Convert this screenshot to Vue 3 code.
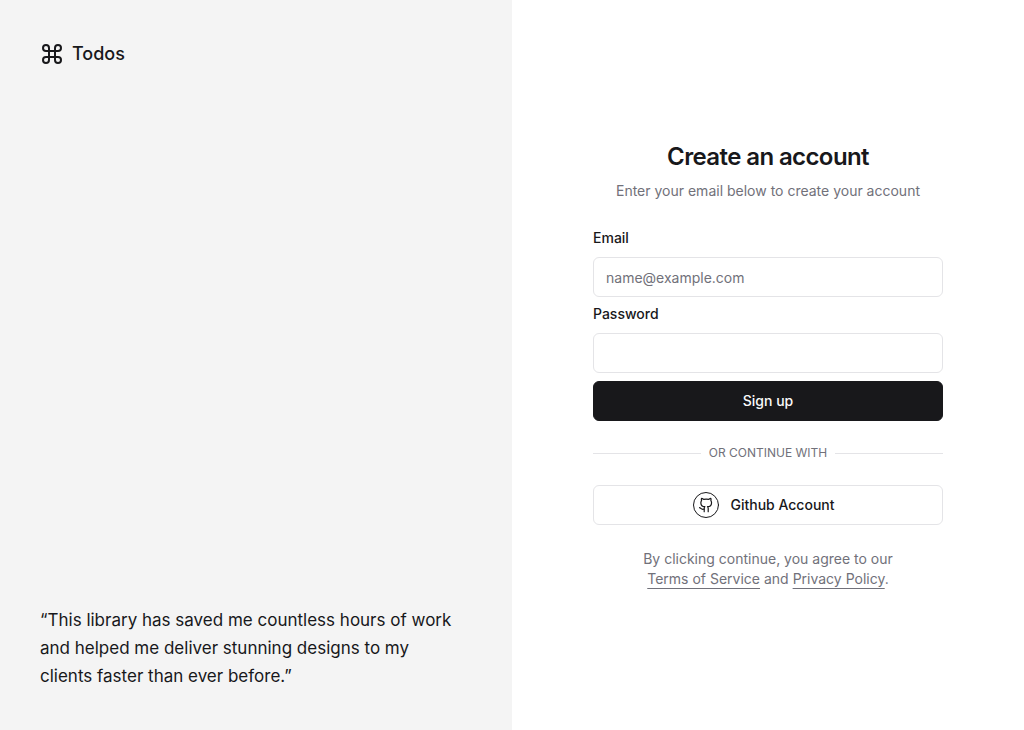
<script setup>
import { ref } from 'vue'

const email = ref('')
const password = ref('')
</script>

<template>
  <div class="page">
    <aside class="side">
      <div class="brand">
        <svg class="brand-icon" viewBox="0 0 24 24" fill="none" stroke="currentColor" stroke-width="2" stroke-linecap="round" stroke-linejoin="round" aria-hidden="true">
          <path d="M15 6v12a3 3 0 1 0 3-3H6a3 3 0 1 0 3 3V6a3 3 0 1 0-3 3h12a3 3 0 1 0-3-3" />
        </svg>
        Todos
      </div>
      <blockquote class="quote">
        <p>“This library has saved me countless hours of work and helped me deliver stunning designs to my clients faster than ever before.”</p>
      </blockquote>
    </aside>
    <main class="main">
      <div class="panel">
        <header class="heading">
          <h1>Create an account</h1>
          <p>Enter your email below to create your account</p>
        </header>
        <form class="form" @submit.prevent>
          <div class="fields">
            <div class="field">
              <div class="label-row"><label for="email">Email</label></div>
              <input id="email" v-model="email" type="email" placeholder="name@example.com" />
            </div>
            <div class="field">
              <div class="label-row"><label for="password">Password</label></div>
              <input id="password" v-model="password" type="password" />
            </div>
          </div>
          <button class="btn primary" type="submit">Sign up</button>
        </form>
        <div class="divider"><span>Or continue with</span></div>
        <button class="btn outline" type="button">
          <svg class="github" viewBox="0 0 26 26" fill="none" stroke="currentColor" stroke-linecap="round" stroke-linejoin="round" aria-hidden="true">
            <circle cx="13" cy="13" r="12.5" />
            <g transform="translate(5.2 5) scale(0.667)" stroke-width="1.8">
              <path d="M15 22v-4a4.800 4.800 0 0 0-1-3.500c3 0 6-2 6-5.500.080-1.250-.270-2.480-1-3.500.280-1.150.280-2.350 0-3.500 0 0-1 0-3 1.500-2.640-.5-5.360-.5-8 0C6 2 5 2 5 2c-.3 1.150-.3 2.350 0 3.500A5.403 5.403 0 0 0 4 9c0 3.500 3 5.500 6 5.500-.390.490-.680 1.050-.850 1.650-.170.600-.220 1.230-.150 1.850v4" />
              <path d="M9 18c-4.510 2-5-2-7-2" />
            </g>
          </svg>
          Github Account
        </button>
        <p class="terms">
          By clicking continue, you agree to our<br />
          <a href="#terms">Terms of Service</a> and <a href="#privacy">Privacy Policy</a>.
        </p>
      </div>
    </main>
  </div>
</template>

<style>
body {
  margin: 0;
  background: #fff;
}
</style>

<style scoped>
.page {
  display: grid;
  grid-template-columns: 1fr 1fr;
  min-height: 100vh;
  color: #18181b;
  font-family: Inter, "Liberation Sans", sans-serif;
  font-size: 14px;
  line-height: 20px;
}
.page * {
  box-sizing: border-box;
}
.side {
  display: flex;
  flex-direction: column;
  justify-content: space-between;
  padding: 40px;
  background: #f4f4f4;
  line-height: 28px;
}
.brand {
  display: flex;
  align-items: center;
  gap: 8px;
  font-size: 18px;
  font-weight: 500;
}
.brand-icon {
  width: 24px;
  height: 24px;
}
.quote,
p,
h1 {
  margin: 0;
}
.quote {
  max-width: 424px;
  font-size: 17px;
}
.main {
  display: flex;
  align-items: center;
  justify-content: center;
}
.panel {
  display: flex;
  flex-direction: column;
  gap: 24px;
  width: 100%;
  max-width: 350px;
}
.heading {
  display: flex;
  flex-direction: column;
  gap: 8px;
  text-align: center;
}
h1 {
  font-size: 24px;
  line-height: 32px;
  font-weight: 600;
  letter-spacing: -0.025em;
}
.heading p,
.terms {
  color: #71717a;
}
.form,
.field {
  display: flex;
  flex-direction: column;
  gap: 8px;
}
.fields {
  display: flex;
  flex-direction: column;
  gap: 4px;
}
.label-row {
  font-size: 16px;
  line-height: 24px;
}
label {
  font-size: 14px;
  font-weight: 500;
  line-height: 14px;
}
input {
  width: 100%;
  height: 40px;
  padding: 8px 12px;
  border: 1px solid #e4e4e7;
  border-radius: 6px;
  background: #fff;
  color: inherit;
  font: inherit;
}
input::placeholder {
  color: #71717a;
}
.btn {
  display: flex;
  align-items: center;
  justify-content: center;
  height: 40px;
  border: 1px solid #e4e4e7;
  border-radius: 6px;
  font: inherit;
  font-weight: 500;
  cursor: pointer;
}
.primary {
  border-color: #18181b;
  background: #18181b;
  color: #fafafa;
}
.outline {
  gap: 11px;
  padding: 0 24px 0 16px;
  background: #fff;
  color: inherit;
}
.github {
  width: 26px;
  height: 26px;
}
.divider {
  display: flex;
  align-items: center;
  gap: 8px;
  color: #71717a;
  font-size: 12px;
  line-height: 16px;
  text-transform: uppercase;
}
.divider::before,
.divider::after {
  content: "";
  flex: 1;
  height: 1px;
  background: #e4e4e7;
}
.terms {
  text-align: center;
}
.terms a {
  color: inherit;
  text-decoration: underline;
  text-decoration-skip-ink: none;
  text-underline-offset: 4px;
}
</style>
